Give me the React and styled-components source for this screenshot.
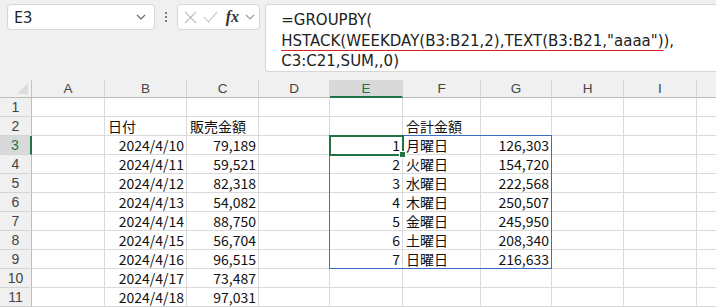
import React from 'react';
import styled, { createGlobalStyle } from 'styled-components';

const Global = createGlobalStyle`
  html, body { margin: 0; padding: 0; background: #ffffff; overflow: hidden; }
  #root { width: 716px; height: 307px; overflow: hidden; }
`

const cols = [
  { name: 'A', w: 73 }, { name: 'B', w: 82 }, { name: 'C', w: 72 }, { name: 'D', w: 71 },
  { name: 'E', w: 73 }, { name: 'F', w: 78 }, { name: 'G', w: 71 }, { name: 'H', w: 72 },
  { name: 'I', w: 73 }, { name: '', w: 72 },
];
const HEAD_W = 32;
const HEAD_H = 18;
const ROW_H = 19;

const sales = [
  ['2024/4/10', '79,189'], ['2024/4/11', '59,521'], ['2024/4/12', '82,318'],
  ['2024/4/13', '54,082'], ['2024/4/14', '88,750'], ['2024/4/15', '56,704'],
  ['2024/4/16', '96,515'], ['2024/4/17', '73,487'], ['2024/4/18', '97,031'],
];
const totals = [
  ['1', '月曜日', '126,303'], ['2', '火曜日', '154,720'], ['3', '水曜日', '222,568'],
  ['4', '木曜日', '250,507'], ['5', '金曜日', '245,950'], ['6', '土曜日', '208,340'],
  ['7', '日曜日', '216,633'],
];

const Page = styled.div`
  width: 716px;
  height: 307px;
  display: flex;
  flex-direction: column;
  background: #f0f0f0;
`
const Bar = styled.div`
  height: 80px;
  flex: none;
  display: flex;
  align-items: flex-start;
  padding-top: 4px;
  box-sizing: border-box;
`
const NameBox = styled.div`
  margin-left: 7px;
  width: 151px;
  height: 26px;
  box-sizing: border-box;
  background: #fff;
  border: 1px solid #d6d6d6;
  border-radius: 4px;
  display: flex;
  align-items: center;
  justify-content: space-between;
  padding: 0 8px 0 6px;
  font-family: "Noto Sans", sans-serif;
  font-size: 16px;
  color: #222;
`
const Dots = styled.div`
  width: 22px;
  height: 26px;
  display: flex;
  flex-direction: column;
  align-items: center;
  justify-content: center;
  gap: 2px;
  span { width: 2px; height: 2px; background: #555; border-radius: 1px; }
`
const FxBox = styled.div`
  width: 85px;
  height: 26px;
  box-sizing: border-box;
  background: #fff;
  border: 1px solid #d6d6d6;
  border-radius: 4px;
  display: flex;
  align-items: center;
  padding: 0 3px 0 6px;
  gap: 6px;
`
const Fx = styled.span`
  font-family: "Liberation Serif", serif;
  font-style: italic;
  font-weight: bold;
  font-size: 16px;
  color: #333;
  margin-left: 2px;
`
const FormulaBox = styled.div`
  margin-left: 5px;
  width: 460px;
  height: 68px;
  box-sizing: border-box;
  background: #fff;
  border: 1px solid #d6d6d6;
  border-right: none;
  border-radius: 4px 0 0 4px;
  padding: 5px 0 0 15px;
  font-family: "DejaVu Sans", sans-serif;
  font-size: 15px;
  line-height: 20.5px;
  color: #222;
  white-space: nowrap;
`
const Squiggle = styled.span`
  text-decoration: underline;
  text-decoration-color: #e02020;
  text-underline-offset: 4px;
  text-decoration-thickness: 1px;
`
const Sheet = styled.div`
  position: relative;
  flex: 1;
  overflow: hidden;
  display: grid;
  grid-template-columns: ${HEAD_W}px ${cols.map(c => c.w + 'px').join(' ')};
  grid-template-rows: ${HEAD_H}px repeat(11, ${ROW_H}px);
  background: #fff;
  font-family: "Noto Sans CJK JP", sans-serif;
`
const Corner = styled.div`
  background: #f0f0f0;
  border-right: 1px solid #c6c6c6;
  border-bottom: 1px solid #bdbdbd;
  position: relative;
  &::after {
    content: '';
    position: absolute;
    right: 3px;
    bottom: 3px;
    border-left: 11px solid transparent;
    border-bottom: 11px solid #dcdcdc;
  }
`
const ColHead = styled.div`
  background: ${p => (p.$active ? '#d9d9d9' : '#f0f0f0')};
  border-right: 1px solid #d4d4d4;
  border-bottom: ${p => (p.$active ? '2px solid #217346' : '1px solid #bdbdbd')};
  box-sizing: border-box;
  display: flex;
  align-items: center;
  justify-content: center;
  font-family: "Liberation Sans", sans-serif;
  font-size: 13.5px;
  color: ${p => (p.$active ? '#217346' : '#444')};
`
const RowHead = styled.div`
  background: ${p => (p.$active ? '#d9d9d9' : '#f0f0f0')};
  border-right: ${p => (p.$active ? '2px solid #217346' : '1px solid #bdbdbd')};
  border-bottom: 1px solid #d4d4d4;
  box-sizing: border-box;
  display: flex;
  align-items: center;
  justify-content: center;
  font-family: "Liberation Sans", sans-serif;
  font-size: 14px;
  color: ${p => (p.$active ? '#217346' : '#444')};
`
const Cell = styled.div`
  border-right: 1px solid #dadada;
  border-bottom: 1px solid #dadada;
  display: flex;
  align-items: center;
  justify-content: ${p => (p.$right ? 'flex-end' : 'flex-start')};
  padding: 0 2px 0 3px;
  font-size: 14px;
  color: #111;
  white-space: nowrap;
  overflow: hidden;
  box-sizing: border-box;
`
const Spill = styled.div`
  position: absolute;
  border: 1px solid #3c6fc4;
  pointer-events: none;
`
const Selected = styled.div`
  position: absolute;
  border: 2px solid #217346;
  box-sizing: border-box;
  &::after {
    content: '';
    position: absolute;
    right: -4px;
    bottom: -4px;
    width: 5px;
    height: 5px;
    background: #217346;
    border: 1px solid #fff;
  }
`

const Chevron = ({ color = '#666' }) => (
  <svg width="10" height="6" viewBox="0 0 10 6" fill="none" stroke={color} strokeWidth="1.1">
    <path d="M1 1l4 4 4-4" />
  </svg>
);

const cellValue = (r, c) => {
  if (r === 2) {
    if (c === 1) return ['日付', false];
    if (c === 2) return ['販売金額', false];
    if (c === 5) return ['合計金額', false];
  }
  const si = r - 3;
  if (si >= 0 && si < sales.length) {
    if (c === 1) return [sales[si][0], true];
    if (c === 2) return [sales[si][1], true];
  }
  if (si >= 0 && si < totals.length) {
    if (c === 4) return [totals[si][0], true];
    if (c === 5) return [totals[si][1], false];
    if (c === 6) return [totals[si][2], true];
  }
  return ['', false];
};

const colLeft = i => HEAD_W + cols.slice(0, i).reduce((s, c) => s + c.w, 0);

export default function App() {
  const rows = Array.from({ length: 11 }, (_, i) => i + 1);
  return (
    <Page>
      <Global />
      <Bar>
        <NameBox>
          <span>E3</span>
          <Chevron />
        </NameBox>
        <Dots><span /><span /><span /></Dots>
        <FxBox>
          <svg width="13" height="13" viewBox="0 0 13 13" stroke="#bdbdbd" strokeWidth="1.1">
            <path d="M1 1l11 11M12 1L1 12" />
          </svg>
          <svg width="15" height="12" viewBox="0 0 15 12" fill="none" stroke="#bdbdbd" strokeWidth="1.1">
            <path d="M1 6l4.5 5L14 1" />
          </svg>
          <Fx>fx</Fx>
          <Chevron color="#999" />
        </FxBox>
        <FormulaBox>
          <div>=GROUPBY(</div>
          <div><Squiggle>HSTACK(WEEKDAY(B3:B21,2),TEXT(B3:B21,"aaaa")</Squiggle>),</div>
          <div>C3:C21,SUM,,0)</div>
        </FormulaBox>
      </Bar>
      <Sheet>
        <Corner />
        {cols.map((c, i) => (
          <ColHead key={i} $active={c.name === 'E'}>{c.name}</ColHead>
        ))}
        {rows.map(r => (
          <React.Fragment key={r}>
            <RowHead $active={r === 3}>{r}</RowHead>
            {cols.map((c, ci) => {
              const [v, right] = cellValue(r, ci);
              return <Cell key={ci} $right={right}>{v}</Cell>;
            })}
          </React.Fragment>
        ))}
        <Spill
          style={{
            left: colLeft(4) - 1,
            top: HEAD_H + 2 * ROW_H - 1,
            width: cols[4].w + cols[5].w + cols[6].w - 1,
            height: 7 * ROW_H - 1,
          }}
        />
        <Selected
          style={{
            left: colLeft(4) - 1,
            top: HEAD_H + 2 * ROW_H - 1,
            width: cols[4].w + 2,
            height: ROW_H + 2,
          }}
        />
      </Sheet>
    </Page>
  );
}
